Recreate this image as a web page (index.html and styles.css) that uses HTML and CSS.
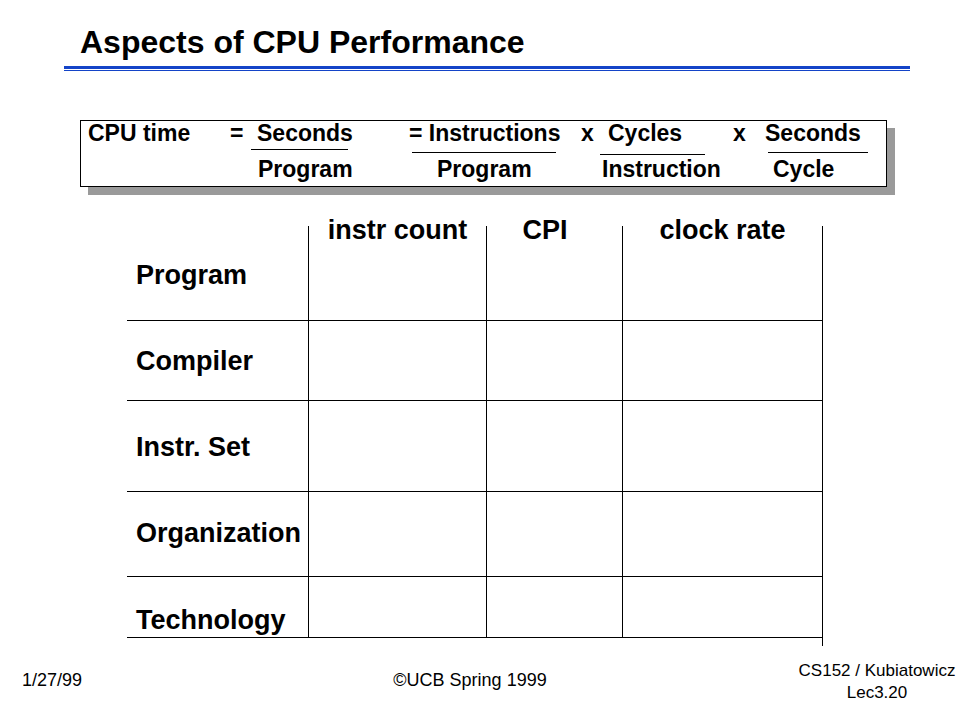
FILE: index.html
```html
<!DOCTYPE html>
<html lang="en">
<head>
<meta charset="utf-8">
<title>Aspects of CPU Performance</title>
<link rel="stylesheet" href="styles.css">
</head>
<body>
<div class="slide">
  <h1 class="title">Aspects of CPU Performance</h1>
  <div class="rule"></div>

  <div class="formula">
    <div class="f-label">CPU time</div>
    <div class="f-eq">=</div>
    <div class="frac frac-1">
      <div class="num">Seconds</div>
      <div class="bar"></div>
      <div class="den">Program</div>
    </div>
    <div class="f-gap"></div>
    <div class="frac frac-2">
      <div class="num">= Instructions</div>
      <div class="bar"></div>
      <div class="den">Program</div>
    </div>
    <div class="f-times f-times-1">x</div>
    <div class="frac frac-3">
      <div class="num">Cycles</div>
      <div class="bar"></div>
      <div class="den">Instruction</div>
    </div>
    <div class="f-times f-times-2">x</div>
    <div class="frac frac-4">
      <div class="num">Seconds</div>
      <div class="bar"></div>
      <div class="den">Cycle</div>
    </div>
  </div>

  <div class="matrix-wrap">
    <div class="matrix">
      <div class="cell head-blank"></div>
      <div class="cell col head"><span class="head-text">instr count</span></div>
      <div class="cell col head head-cpi"><span class="head-text">CPI</span></div>
      <div class="cell col head"><span class="head-text">clock rate</span></div>

      <div class="cell label row r-program">Program</div>
      <div class="cell col row"></div>
      <div class="cell col row"></div>
      <div class="cell col row"></div>

      <div class="cell label row r-compiler">Compiler</div>
      <div class="cell col row"></div>
      <div class="cell col row"></div>
      <div class="cell col row"></div>

      <div class="cell label row r-iset">Instr. Set</div>
      <div class="cell col row"></div>
      <div class="cell col row"></div>
      <div class="cell col row"></div>

      <div class="cell label row r-org">Organization</div>
      <div class="cell col row"></div>
      <div class="cell col row"></div>
      <div class="cell col row"></div>

      <div class="cell label row r-tech">Technology</div>
      <div class="cell col row"></div>
      <div class="cell col row"></div>
      <div class="cell col row"></div>
    </div>
  </div>

  <div class="footer">
    <div class="foot-date">1/27/99</div>
    <div class="foot-center">&copy;UCB Spring 1999</div>
    <div class="foot-right">CS152 / Kubiatowicz<br>Lec3.20</div>
  </div>
</div>
</body>
</html>
```
FILE: styles.css
```css
* { box-sizing: border-box; }

html, body {
  margin: 0;
  padding: 0;
  background: #ffffff;
}

body {
  width: 960px;
  height: 720px;
  overflow: hidden;
  font-family: "Liberation Sans", Arial, sans-serif;
  color: #000;
}

.slide {
  width: 960px;
  height: 720px;
}

.title {
  margin: 0;
  padding: 24px 0 0 80px;
  font-size: 32px;
  line-height: 36px;
  font-weight: bold;
}

.rule {
  margin: 6px 0 0 64px;
  width: 846px;
  height: 5px;
  border-top: 3px solid #1444c8;
  border-bottom: 1px solid #1444c8;
}

/* formula box */
.formula {
  margin: 49px 0 0 80px;
  width: 807px;
  height: 67px;
  border: 1px solid #000;
  box-shadow: 8px 8px 0 #9a9a9a;
  display: flex;
  align-items: flex-start;
  font-size: 23px;
  line-height: 24px;
  font-weight: bold;
  white-space: nowrap;
}

.f-label { width: 149px; padding-left: 7px; }
.f-eq { width: 21px; }
.f-gap { width: 64px; }
.f-times-1 { width: 44px; padding-left: 25px; }
.f-times-2 { width: 63px; padding-left: 28px; }

.frac {
  display: flex;
  flex-direction: column;
}
.frac .num, .frac .den { height: 24px; }
.frac .bar { height: 1px; background: #000; }

.frac-1 { width: 97px; }
.frac-1 .num { padding-left: 6px; }
.frac-1 .bar { margin-top: 4px; }
.frac-1 .den { margin-top: 7px; padding-left: 7px; }

.frac-2 { width: 144px; }
.frac-2 .num { margin-left: -3px; }
.frac-2 .bar { margin-top: 7px; }
.frac-2 .den { margin-top: 4px; padding-left: 25px; }

.frac-3 { width: 105px; }
.frac-3 .num { padding-left: 8px; }
.frac-3 .bar { margin-top: 9px; }
.frac-3 .den { margin-top: 2px; padding-left: 2px; }

.frac-4 { width: 100px; }
.frac-4 .num { margin-left: -3px; }
.frac-4 .bar { margin-top: 7px; }
.frac-4 .den { margin-top: 4px; padding-left: 5px; }

/* matrix */
.matrix-wrap {
  margin: 39px 0 0 127px;
  width: 696px;
  padding-bottom: 8px;
  border-right: 1px solid #000;
}

.matrix {
  display: grid;
  grid-template-columns: 181px 178px 136px 200px;
  grid-template-rows: 30px 65px 80px 91px 85px 61px;
  font-size: 27px;
  line-height: 31px;
  font-weight: bold;
  white-space: nowrap;
}

.cell { min-width: 0; }
.col { border-left: 1px solid #000; }
.row { border-bottom: 1px solid #000; }

.head { text-align: center; }
.head-text {
  display: block;
  margin-top: -11px;
}
.head-cpi { padding-right: 19px; }

.label { padding-left: 9px; }
.r-program { padding-top: 4px; }
.r-compiler { padding-top: 25px; }
.r-iset { padding-top: 31px; }
.r-org { padding-top: 26px; }
.r-tech { padding-top: 28px; }

/* footer */
.footer {
  margin-top: 14px;
  display: flex;
  align-items: flex-start;
  font-size: 18px;
  line-height: 22px;
  white-space: nowrap;
}
.foot-date { width: 320px; padding: 9px 0 0 22px; }
.foot-center { width: 300px; padding-top: 9px; text-align: center; }
.foot-right {
  width: 166px;
  margin-left: 174px;
  text-align: center;
  font-size: 17px;
}
```
